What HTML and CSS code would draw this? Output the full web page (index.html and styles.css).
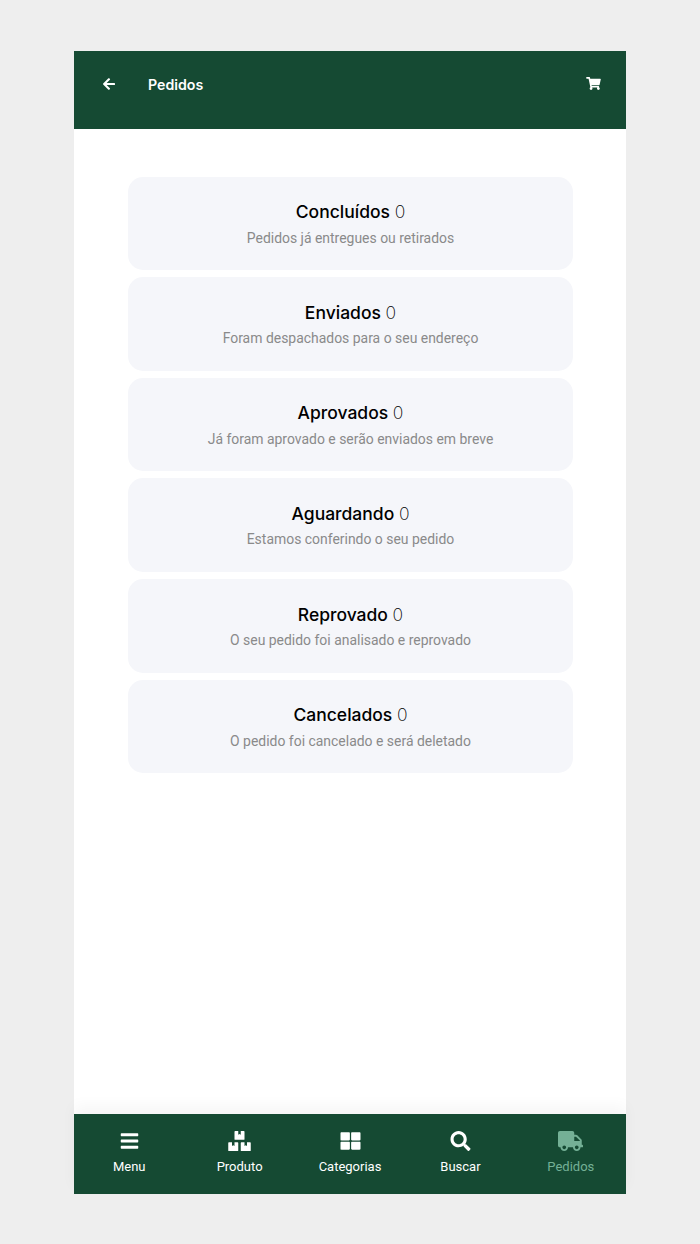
FILE: index.html
```html
<!DOCTYPE html>
<html>
<head>
  <meta http-equiv="content-type" content="text/html; charset=utf-8" />
  <title>Pedidos</title>
  <link rel="stylesheet" href="styles.css">
</head>
<body>

<div class="phone">

  <div class="topbar">
    <svg class="back" viewBox="0 0 448 512"><path d="M257.5 445.1l-22.2 22.2c-9.4 9.4-24.6 9.4-33.9 0L7 273c-9.4-9.4-9.4-24.6 0-33.9L201.4 44.7c9.4-9.4 24.6-9.4 33.9 0l22.2 22.2c9.5 9.5 9.3 25-.4 34.3L136.6 216H424c13.3 0 24 10.7 24 24v32c0 13.3-10.7 24-24 24H136.6l120.5 114.8c9.8 9.3 10 24.8.4 34.3z"/></svg>
    <div class="pagetitle">Pedidos</div>
    <svg class="cart" viewBox="0 0 576 512"><path d="M528.12 301.319l47.273-208C578.806 78.301 567.391 64 551.99 64H159.208l-9.166-44.81C147.758 8.021 137.93 0 126.529 0H24C10.745 0 0 10.745 0 24v16c0 13.255 10.745 24 24 24h69.883l70.248 343.435C147.325 417.1 136 435.222 136 456c0 30.928 25.072 56 56 56s56-25.072 56-56c0-15.674-6.447-29.835-16.824-40h209.647C430.447 426.165 424 440.326 424 456c0 30.928 25.072 56 56 56s56-25.072 56-56c0-22.172-12.888-41.332-31.579-50.405l5.517-24.276c3.413-15.018-8.002-29.319-23.403-29.319H218.117l-6.545-32h293.145c11.206 0 20.92-7.754 23.403-18.681z"/></svg>
  </div>

  <div class="content">
    <div class="card">
      <div class="cardtitle">Concluídos <span class="count">0</span></div>
      <div class="cardtext">Pedidos já entregues ou retirados</div>
    </div>
    <div class="card">
      <div class="cardtitle">Enviados <span class="count">0</span></div>
      <div class="cardtext">Foram despachados para o seu endereço</div>
    </div>
    <div class="card">
      <div class="cardtitle">Aprovados <span class="count">0</span></div>
      <div class="cardtext">Já foram aprovado e serão enviados em breve</div>
    </div>
    <div class="card">
      <div class="cardtitle">Aguardando <span class="count">0</span></div>
      <div class="cardtext">Estamos conferindo o seu pedido</div>
    </div>
    <div class="card">
      <div class="cardtitle">Reprovado <span class="count">0</span></div>
      <div class="cardtext">O seu pedido foi analisado e reprovado</div>
    </div>
    <div class="card">
      <div class="cardtitle">Cancelados <span class="count">0</span></div>
      <div class="cardtext">O pedido foi cancelado e será deletado</div>
    </div>
  </div>

  <div class="bottomnav">
    <div class="navitem">
      <svg class="navicon" viewBox="0 0 448 512"><path d="M16 132h416c8.837 0 16-7.163 16-16V76c0-8.837-7.163-16-16-16H16C7.163 60 0 67.163 0 76v40c0 8.837 7.163 16 16 16zm0 160h416c8.837 0 16-7.163 16-16v-40c0-8.837-7.163-16-16-16H16c-8.837 0-16 7.163-16 16v40c0 8.837 7.163 16 16 16zm0 160h416c8.837 0 16-7.163 16-16v-40c0-8.837-7.163-16-16-16H16c-8.837 0-16 7.163-16 16v40c0 8.837 7.163 16 16 16z"/></svg>
      <div>Menu</div>
    </div>
    <div class="navitem">
      <svg class="navicon" viewBox="0 0 576 512"><path d="M560 288h-80v96l-32-21.3-32 21.3v-96h-80c-8.8 0-16 7.2-16 16v192c0 8.8 7.2 16 16 16h224c8.8 0 16-7.2 16-16V304c0-8.8-7.2-16-16-16zm-384-64h224c8.8 0 16-7.2 16-16V16c0-8.8-7.2-16-16-16h-80v96l-32-21.3L256 96V0h-80c-8.8 0-16 7.2-16 16v192c0 8.8 7.2 16 16 16zm64 64h-80v96l-32-21.3L96 384v-96H16c-8.8 0-16 7.2-16 16v192c0 8.8 7.2 16 16 16h224c8.8 0 16-7.2 16-16V304c0-8.8-7.2-16-16-16z"/></svg>
      <div>Produto</div>
    </div>
    <div class="navitem">
      <svg class="navicon" viewBox="0 0 512 512"><path d="M296 32h192c13.255 0 24 10.745 24 24v160c0 13.255-10.745 24-24 24H296c-13.255 0-24-10.745-24-24V56c0-13.255 10.745-24 24-24zm-80 0H24C10.745 32 0 42.745 0 56v160c0 13.255 10.745 24 24 24h192c13.255 0 24-10.745 24-24V56c0-13.255-10.745-24-24-24zM0 296v160c0 13.255 10.745 24 24 24h192c13.255 0 24-10.745 24-24V296c0-13.255-10.745-24-24-24H24c-13.255 0-24 10.745-24 24zm296 184h192c13.255 0 24-10.745 24-24V296c0-13.255-10.745-24-24-24H296c-13.255 0-24 10.745-24 24v160c0 13.255 10.745 24 24 24z"/></svg>
      <div>Categorias</div>
    </div>
    <div class="navitem">
      <svg class="navicon" viewBox="0 0 512 512"><path d="M505 442.7L405.3 343c-4.5-4.5-10.6-7-17-7H372c27.6-35.3 44-79.7 44-128C416 93.1 322.9 0 208 0S0 93.1 0 208s93.1 208 208 208c48.3 0 92.7-16.4 128-44v16.3c0 6.4 2.5 12.5 7 17l99.7 99.7c9.4 9.4 24.6 9.4 33.9 0l28.3-28.3c9.4-9.4 9.4-24.6.1-34zM208 336c-70.7 0-128-57.2-128-128 0-70.7 57.2-128 128-128 70.7 0 128 57.2 128 128 0 70.7-57.2 128-128 128z"/></svg>
      <div>Buscar</div>
    </div>
    <div class="navitem active">
      <svg class="navicon" viewBox="0 0 640 512"><path d="M624 352h-16V243.9c0-12.7-5.1-24.9-14.1-33.9L494 110.1c-9-9-21.2-14.1-33.9-14.1H416V48c0-26.5-21.5-48-48-48H48C21.5 0 0 21.5 0 48v320c0 26.5 21.5 48 48 48h16c0 53 43 96 96 96s96-43 96-96h128c0 53 43 96 96 96s96-43 96-96h48c8.8 0 16-7.2 16-16v-32c0-8.8-7.2-16-16-16zM160 464c-26.5 0-48-21.5-48-48s21.5-48 48-48 48 21.5 48 48-21.5 48-48 48zm320 0c-26.5 0-48-21.5-48-48s21.5-48 48-48 48 21.5 48 48-21.5 48-48 48zm80-208H416V144h44.1l99.9 99.9V256z"/></svg>
      <div>Pedidos</div>
    </div>
  </div>

</div>

</body>
</html>
```

FILE: styles.css
```css
html, body {
  margin: 0;
  height: 100%;
}
body {
  background-color: #eeeeee;
  font-family: Roboto, "Liberation Sans", sans-serif;
  padding: 51px 74px 50px;
  box-sizing: border-box;
}
.phone {
  height: 100%;
  display: flex;
  flex-direction: column;
  background-color: #fff;
}
.topbar {
  height: 78px;
  flex: none;
  box-sizing: border-box;
  display: flex;
  align-items: flex-start;
  padding: 26px 25px 0 29px;
  background-color: #154a33;
  color: #fff;
}
.back {
  width: 12px;
  height: 14px;
  fill: #fff;
}
.pagetitle {
  margin-left: 33px;
  font-family: Inter, sans-serif;
  font-weight: 600;
  font-size: 14.2px;
  line-height: 16px;
  flex: 1;
}
.cart {
  width: 15px;
  height: 13px;
  fill: #fff;
}
.content {
  flex: 1;
  display: flex;
  flex-direction: column;
  gap: 7px;
  padding: 47.7px 53px 0 54px;
}
.card {
  height: 93.6px;
  box-sizing: border-box;
  padding-top: 23.5px;
  border-radius: 15px;
  background-color: #f5f6fa;
  text-align: center;
}
.cardtitle {
  font-family: Inter, sans-serif;
  font-weight: 500;
  font-size: 17.5px;
  line-height: 24px;
  color: #000;
}
.count {
  font-weight: 200;
  color: #000;
}
.cardtext {
  margin-top: 3.5px;
  font-size: 13.95px;
  line-height: 20px;
  color: #8a8a8a;
}
.bottomnav {
  height: 80px;
  flex: none;
  display: flex;
  background-color: #154a33;
  box-shadow: 0 -8px 14px rgba(0, 0, 0, 0.04);
  color: #fff;
  font-size: 13px;
  line-height: 16px;
}
.navitem {
  flex: 1;
  display: flex;
  flex-direction: column;
  align-items: center;
  padding-top: 17px;
  gap: 8px;
}
.navicon {
  height: 20px;
  width: 25px;
  fill: #fff;
}
.active {
  color: #74b096;
}
.active .navicon {
  fill: #74b096;
}
```
